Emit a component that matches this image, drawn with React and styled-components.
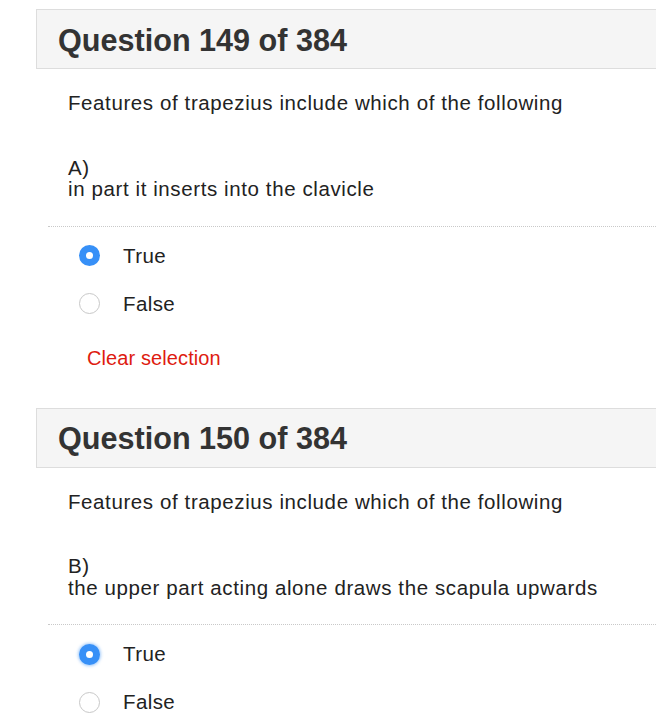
import React from "react";
import styled, { createGlobalStyle } from "styled-components";

const Global = createGlobalStyle`
  html, body {
    margin: 0;
    padding: 0;
    background: #ffffff;
    overflow-x: hidden;
  }
  body {
    font-family: "Liberation Sans", Helvetica, Arial, sans-serif;
    color: #222222;
  }
`;

const Page = styled.div`
  padding: 9px 0 0 36px;
  display: flex;
  flex-direction: column;
`;

const Block = styled.section`
  display: flex;
  flex-direction: column;
  margin-bottom: 38px;
`;

const Header = styled.div`
  height: 58px;
  margin-right: -20px;
  background: #f5f5f5;
  border: 1px solid #dddddd;
  display: flex;
  align-items: center;
  padding-left: 21px;
`;

const Title = styled.h2`
  margin: 0;
  font-size: 30.6px;
  font-weight: 700;
  color: #333333;
  line-height: 1;
  padding-top: 2px;
`;

const Prompt = styled.p`
  margin: 23px 0 0 32px;
  font-size: 20.5px;
  letter-spacing: 0.6px;
  line-height: 21.5px;
  color: #222222;
`;

const Statement = styled.div`
  margin: 43px 0 0 32px;
  font-size: 20.5px;
  letter-spacing: 0.6px;
  line-height: 21.5px;
  color: #222222;
`;

const Divider = styled.div`
  margin: 26px -20px 0 12px;
  border-top: 1px dotted #c9c9c9;
`;

const Options = styled.div`
  display: flex;
  flex-direction: column;
  margin-top: 5px;
`;

const Option = styled.label`
  height: 48px;
  display: flex;
  align-items: center;
  padding-left: 43px;
  font-size: 20.5px;
  letter-spacing: 0.4px;
  color: #222222;
`;

const Radio = styled.span`
  width: 21px;
  height: 21px;
  box-sizing: border-box;
  border-radius: 50%;
  margin-right: 23px;
  flex-shrink: 0;
  display: flex;
  align-items: center;
  justify-content: center;
  background: ${(p) => (p.$checked ? "#3790f7" : "#ffffff")};
  border: ${(p) => (p.$checked ? "none" : "1px solid #c8c8c8")};
  box-shadow: ${(p) =>
    p.$focused ? "0 0 3px 1px rgba(55, 144, 247, 0.45)" : "none"};

  &::after {
    content: "";
    display: ${(p) => (p.$checked ? "block" : "none")};
    width: 7px;
    height: 7px;
    border-radius: 50%;
    background: #ffffff;
  }
`;

const Clear = styled.a`
  margin: 18px 0 0 51px;
  font-size: 20px;
  line-height: 24px;
  letter-spacing: 0.1px;
  color: #de1b10;
  text-decoration: none;
  cursor: pointer;
`;

const questions = [
  {
    n: 149,
    letter: "A)",
    statement: "in part it inserts into the clavicle",
    answer: "True",
    focused: false,
  },
  {
    n: 150,
    letter: "B)",
    statement: "the upper part acting alone draws the scapula upwards",
    answer: "True",
    focused: true,
  },
];

function Question({ q }) {
  return (
    <Block>
      <Header>
        <Title>
          Question {q.n} of 384
        </Title>
      </Header>
      <Prompt>Features of trapezius include which of the following</Prompt>
      <Statement>
        {q.letter}
        <br />
        {q.statement}
      </Statement>
      <Divider />
      <Options>
        {["True", "False"].map((opt) => (
          <Option key={opt}>
            <Radio
              $checked={q.answer === opt}
              $focused={q.focused && q.answer === opt}
            />
            {opt}
          </Option>
        ))}
      </Options>
      <Clear>Clear selection</Clear>
    </Block>
  );
}

export default function App() {
  return (
    <>
      <Global />
      <Page>
        {questions.map((q) => (
          <Question key={q.n} q={q} />
        ))}
      </Page>
    </>
  );
}
